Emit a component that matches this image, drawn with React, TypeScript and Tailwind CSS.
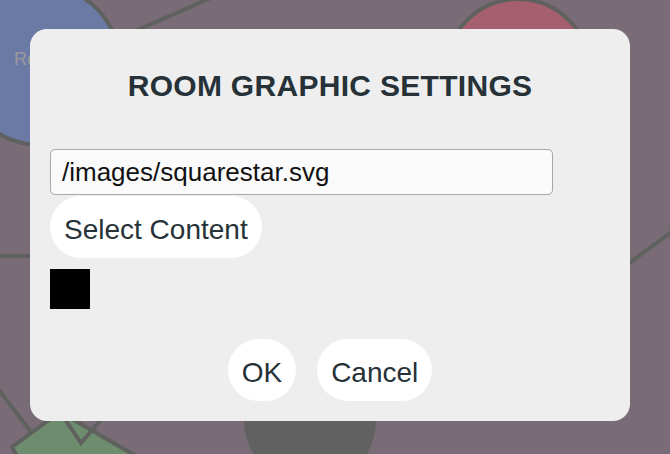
import React from 'react';

function Canvas() {
  return (
    <svg className="absolute inset-0" width="670" height="454" viewBox="0 0 670 454">
      <line x1="110" y1="42" x2="220" y2="-6" stroke="#5e615e" strokeWidth="4" />
      <line x1="0" y1="256" x2="60" y2="256" stroke="#5e615e" strokeWidth="4" />
      <line x1="600" y1="285" x2="690" y2="218" stroke="#5e615e" strokeWidth="4" />
      <line x1="-10" y1="378" x2="40" y2="444" stroke="#5e615e" strokeWidth="4" />
      <circle cx="40" cy="65" r="80" fill="#6b79a5" stroke="#5e615e" strokeWidth="4" />
      <text x="14" y="65" fontFamily="Liberation Sans, Arial, sans-serif" fontSize="18" fill="#9a9a9e">Room</text>
      <circle cx="518" cy="71" r="72" fill="#a55f6e" stroke="#5e615e" strokeWidth="4" />
      <polygon points="12,447 60,412 160,470 30,480" fill="#6e8d6e" stroke="#5e615e" strokeWidth="4" />
      <polyline points="64,418 81,443 104,416" fill="none" stroke="#5e615e" strokeWidth="4" />
      <circle cx="310" cy="420" r="66" fill="#616161" />
    </svg>
  );
}

export default function App() {
  const btn = 'h-[62px] rounded-full bg-white px-[14px] pt-[6px] text-[28px] leading-none text-[#263238] flex items-center justify-center';
  return (
    <div className="relative h-[454px] w-full overflow-hidden bg-[#7a6c76]" style={{ fontFamily: '"Liberation Sans", Arial, sans-serif' }}>
      <Canvas />
      <div className="absolute inset-0 flex pl-[30px] pt-[29px]">
        <div className="w-[600px] h-[392px] rounded-[17px] bg-[#eeeeee] p-5 flex flex-col">
          <h2 className="mt-[19px] text-center text-[30px] leading-[36px] font-bold tracking-[0.3px] text-[#263238]">
            ROOM GRAPHIC SETTINGS
          </h2>
          <input
            type="text"
            defaultValue="/images/squarestar.svg"
            className="mt-[45px] h-[47px] w-[503px] rounded-[5px] border-[1.5px] border-[#a8a8a8] bg-[#fafafa] px-[11px] text-[26px] text-[#111] outline-none"
          />
          <div className="mt-[1px] flex">
            <button className={btn + ' h-[61px]'}>Select Content</button>
          </div>
          <div className="mt-[11px] w-10 h-10 bg-black" />
          <div className="mt-[30px] flex justify-center gap-[21px]">
            <button className={btn}>OK</button>
            <button className={btn}>Cancel</button>
          </div>
        </div>
      </div>
    </div>
  );
}
